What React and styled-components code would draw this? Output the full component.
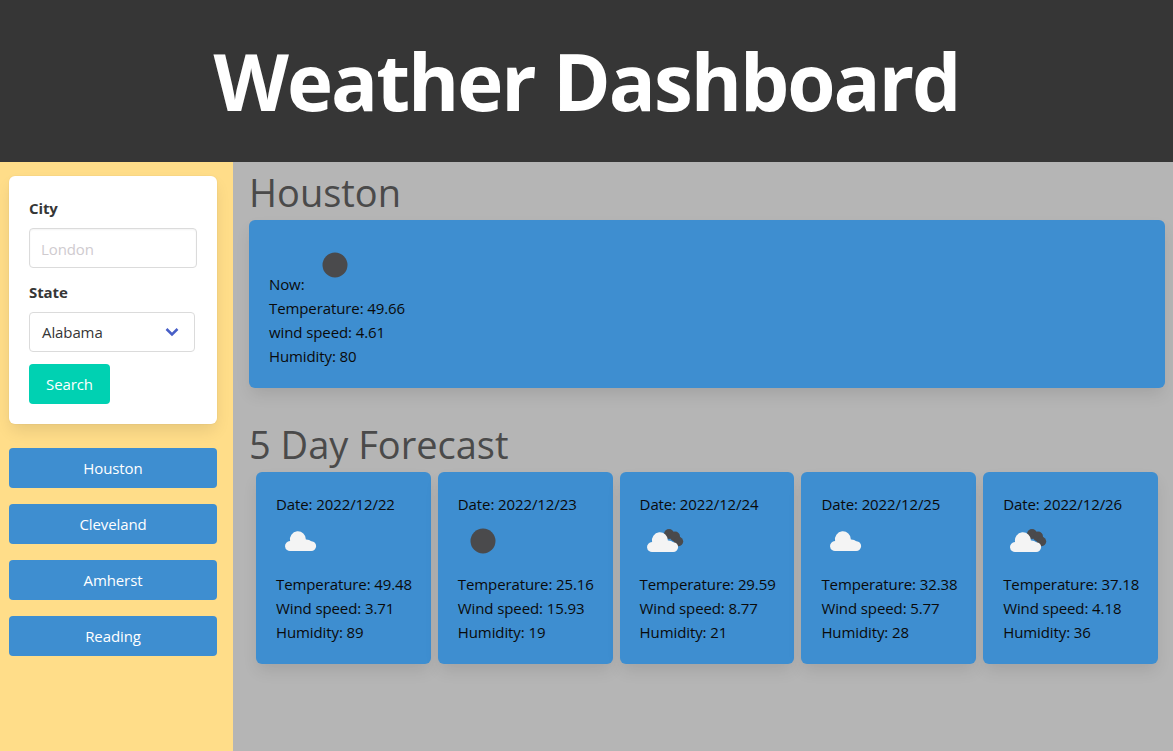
import React from "react";
import styled, { createGlobalStyle } from "styled-components";

const Global = createGlobalStyle`
  html, body { margin: 0; padding: 0; height: 100%; }
  body { font-family: "Open Sans", "Noto Sans", sans-serif; font-size: 15px; letter-spacing: -0.1px; line-height: 24px; color: #4a4a4a; background: #b5b5b5; }
  * { box-sizing: border-box; }
`;

const Page = styled.div`
  width: 1173px;
  height: 751px;
  overflow: hidden;
  display: flex;
  flex-direction: column;
`;

const Header = styled.header`
  height: 162px;
  flex: none;
  background: #363636;
  display: flex;
  align-items: center;
  justify-content: center;
`;

const Title = styled.h1`
  margin: 0;
  color: #fff;
  font-size: 78px;
  line-height: 1;
  font-weight: 700;
  letter-spacing: -2px;
`;

const Body = styled.div`
  flex: 1;
  display: flex;
  min-height: 0;
`;

const Sidebar = styled.aside`
  width: 233px;
  flex: none;
  background: #ffdd89;
  padding: 14px 16px 0 9px;
`;

const SearchBox = styled.form`
  background: #fff;
  border-radius: 6px;
  padding: 20px;
  height: 248px;
  box-shadow: 0 8px 16px -2px rgba(10, 10, 10, 0.1), 0 0 0 1px rgba(10, 10, 10, 0.02);
  margin-bottom: 24px;
`;

const FieldLabel = styled.label`
  display: block;
  color: #363636;
  font-weight: 700;
  margin-bottom: 8px;
`;

const TextInput = styled.input`
  display: block;
  width: 168px;
  height: 40px;
  border: 1px solid #dbdbdb;
  border-radius: 4px;
  padding: 1px 11px 0;
  font: inherit;
  letter-spacing: inherit;
  margin-bottom: 12px;
  box-shadow: inset 0 1px 2px rgba(10, 10, 10, 0.05);
  &::placeholder { color: #cfcbcf; }
`;

const SelectBox = styled.div`
  width: 166px;
  height: 40px;
  border: 1px solid #dbdbdb;
  border-radius: 4px;
  padding: 0 12px;
  display: flex;
  align-items: center;
  justify-content: space-between;
  color: #363636;
  margin-bottom: 12px;
`;

const Chevron = styled.svg`
  width: 14px;
  height: 10px;
  margin-right: 3px;
`;

const SearchButton = styled.button`
  width: 81px;
  height: 40px;
  border: none;
  border-radius: 4px;
  background: #00d1b2;
  color: #fff;
  font: inherit;
  letter-spacing: inherit;
  display: block;
`;

const CityList = styled.div`
  display: flex;
  flex-direction: column;
  gap: 16px;
`;

const CityButton = styled.button`
  height: 40px;
  border: none;
  border-radius: 4px;
  background: #3e8ed0;
  color: #fff;
  font: inherit;
  letter-spacing: inherit;
`;

const Main = styled.main`
  flex: 1;
  padding: 6px 8px 0 16px;
  min-width: 0;
`;

const Heading = styled.h2`
  margin: 0 0 4px;
  font-size: 38px;
  line-height: 48px;
  font-weight: 400;
  letter-spacing: 0;
  color: #4a4a4a;
`;

const NowCard = styled.section`
  height: 168px;
  border-radius: 6px;
  background: #3e8ed0;
  color: #0a0a0a;
  padding: 20px;
  margin-bottom: 32px;
  box-shadow: 0 8px 16px -2px rgba(10, 10, 10, 0.1);
`;

const NowRow = styled.div`
  height: 56px;
`;

const Forecast = styled.div`
  display: flex;
  gap: 7px;
  padding-left: 7px;
`;

const DayCard = styled.article`
  width: 174.8px;
  height: 192px;
  border-radius: 6px;
  background: #3e8ed0;
  color: #0a0a0a;
  padding: 20px 8px 20px 20px;
  box-shadow: 0 8px 16px -2px rgba(10, 10, 10, 0.1);
`;

const IconBox = styled.div`
  height: 50px;
  margin-bottom: 6px;
`;

const NowIcon = styled.svg`
  width: 50px;
  height: 50px;
  margin-left: 6px;
`;

const DayIcon = styled.svg`
  width: 50px;
  height: 50px;
  display: block;
`;

const Sun = () => <circle cx="25" cy="25" r="12.5" fill="#4a4a4c" />;

const Cloud = ({ shift }) => (
  <path
    fill="#f4f4f4"
    transform={shift}
    d="M15 35A5 5 0 1 1 14.100 25.100A8 8 0 1 1 29.900 23.500C32 23.300 34 24.500 35.500 25.200A4.900 4.900 0 0 1 35 35Z"
  />
);

const BackCloud = () => (
  <g fill="#4a4a4c">
    <circle cx="29" cy="18" r="5" />
    <circle cx="35" cy="20.500" r="5" />
    <circle cx="38.500" cy="25.500" r="4.700" />
  </g>
);

const Icon = ({ kind }) => (
  <DayIcon viewBox="0 0 50 50">
    {kind === "sun" && <Sun />}
    {kind === "broken" && <BackCloud />}
    {kind === "broken" && <Cloud shift="translate(-2 1)" />}
    {kind === "cloud" && <Cloud />}
  </DayIcon>
);

const days = [
  { date: "2022/12/22", kind: "cloud", temp: "49.48", wind: "3.71", hum: "89" },
  { date: "2022/12/23", kind: "sun", temp: "25.16", wind: "15.93", hum: "19" },
  { date: "2022/12/24", kind: "broken", temp: "29.59", wind: "8.77", hum: "21" },
  { date: "2022/12/25", kind: "cloud", temp: "32.38", wind: "5.77", hum: "28" },
  { date: "2022/12/26", kind: "broken", temp: "37.18", wind: "4.18", hum: "36" },
];

const cities = ["Houston", "Cleveland", "Amherst", "Reading"];

export default function App() {
  return (
    <Page>
      <Global />
      <Header>
        <Title>Weather Dashboard</Title>
      </Header>
      <Body>
        <Sidebar>
          <SearchBox>
            <FieldLabel>City</FieldLabel>
            <TextInput placeholder="London" />
            <FieldLabel>State</FieldLabel>
            <SelectBox>
              Alabama
              <Chevron viewBox="0 0 14 10">
                <path d="M1.500 2 7 7.500 12.500 2" fill="none" stroke="#485fc7" strokeWidth="2.500" />
              </Chevron>
            </SelectBox>
            <SearchButton type="button">Search</SearchButton>
          </SearchBox>
          <CityList>
            {cities.map((city) => (
              <CityButton key={city}>{city}</CityButton>
            ))}
          </CityList>
        </Sidebar>
        <Main>
          <Heading>Houston</Heading>
          <NowCard>
            <NowRow>
              Now:
              <NowIcon viewBox="0 0 50 50"><Sun /></NowIcon>
            </NowRow>
            <div>Temperature: 49.66</div>
            <div>wind speed: 4.61</div>
            <div>Humidity: 80</div>
          </NowCard>
          <Heading>5 Day Forecast</Heading>
          <Forecast>
            {days.map((d) => (
              <DayCard key={d.date}>
                <div>Date: {d.date}</div>
                <IconBox><Icon kind={d.kind} /></IconBox>
                <div>Temperature: {d.temp}</div>
                <div>Wind speed: {d.wind}</div>
                <div>Humidity: {d.hum}</div>
              </DayCard>
            ))}
          </Forecast>
        </Main>
      </Body>
    </Page>
  );
}
